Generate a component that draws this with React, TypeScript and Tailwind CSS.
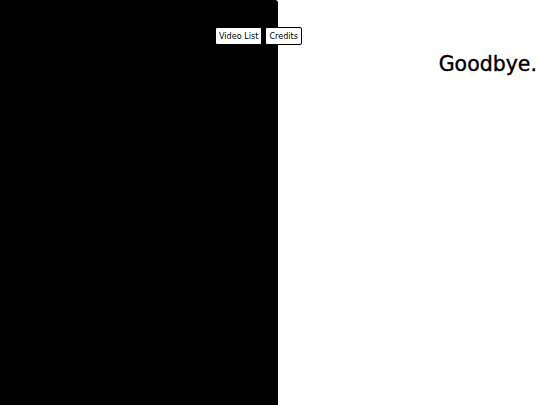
export default function App() {
  return (
    <div className="relative flex h-[405px] w-[540px] overflow-hidden bg-white" style={{ fontFamily: '"DejaVu Sans", sans-serif' }}>
      <div className="h-full w-[278px] rounded-tr-[3px] bg-black" />
      <div className="flex flex-1 justify-end pt-[54px] pr-[3px]">
        <h1 className="text-[20.5px] font-normal leading-none text-black [-webkit-text-stroke:0.4px_black]">Goodbye.</h1>
      </div>
      <div className="absolute left-[215px] top-[27px] flex gap-[3px] font-['DejaVu_Sans_Condensed',sans-serif]">
        <button className="h-[18px] rounded-[2px] border border-black bg-white px-[3px] text-[9px] leading-none text-black">Video List</button>
        <button className="h-[18px] rounded-[2px] border border-black bg-white px-[3px] text-[9px] leading-none text-black">Credits</button>
      </div>
    </div>
  )
}
